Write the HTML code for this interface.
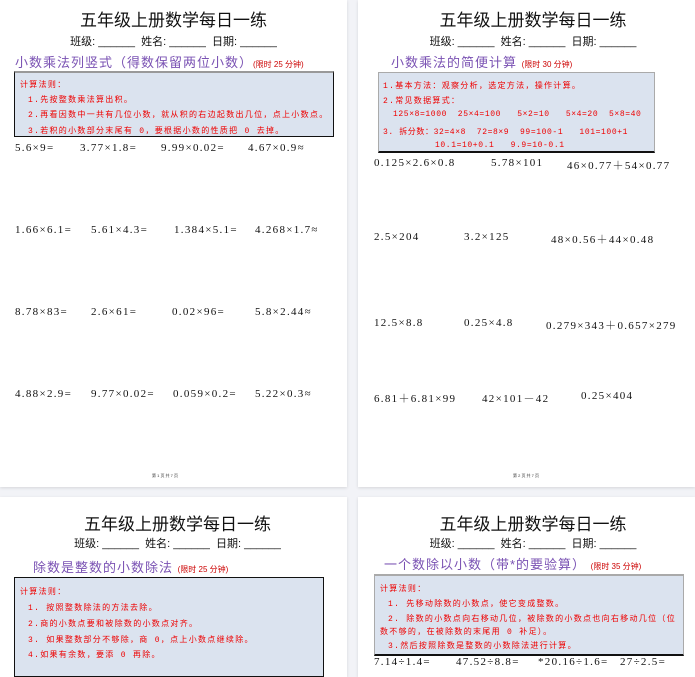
<!DOCTYPE html>
<html><head><meta charset="utf-8"><style>
*{margin:0;padding:0;box-sizing:border-box}
body{width:695px;height:664px;overflow:hidden;background:#f2f3f7;position:relative;font-family:"Liberation Sans","Noto Sans CJK SC",sans-serif}
.pg{position:absolute;background:#fff;box-shadow:0 1px 3px rgba(0,0,0,.12);overflow:hidden}
.a{position:absolute;white-space:nowrap}
.t{font-size:17px;color:#111;text-align:center;width:100%;left:0}
.i{font-size:11px;color:#111;text-align:center;width:100%;left:0}
.s{font-size:13px;color:#7a52b3;letter-spacing:1px}
.s small{font-size:8px;color:#c00;letter-spacing:0}
.box{position:absolute;background:#dbe3ef;border:1px solid #111}
.r{position:absolute;font-size:8px;color:#e00;white-space:nowrap;font-family:"Liberation Mono","Noto Sans CJK SC",monospace;letter-spacing:1.3px}
.q{position:absolute;font-size:11px;color:#111;white-space:nowrap;font-family:"Liberation Serif","Noto Serif CJK SC",serif;letter-spacing:1.3px}
</style></head><body>

<div class="pg" style="left:0;top:0;width:347px;height:487px">
<div class="a t" style="top:6px">五年级上册数学每日一练</div>
<div class="a i" style="top:33px">班级: ______ &nbsp;姓名: ______ &nbsp;日期: ______</div>
<div class="a s" style="left:15px;top:52px">小数乘法列竖式（得数保留两位小数）<small>(限时 25 分钟)</small></div>
<div class="box" style="left:14px;top:71px;width:320px;height:66px;border-top-color:#999;border-top-width:2px"></div>
<div class="r" style="left:20px;top:79px">计算法则：</div>
<div class="r" style="left:28px;top:94px">1.先按整数乘法算出积。</div>
<div class="r" style="left:28px;top:109px">2.再看因数中一共有几位小数，就从积的右边起数出几位，点上小数点。</div>
<div class="r" style="left:28px;top:125px">3.若积的小数部分末尾有 0，要根据小数的性质把 0 去掉。</div>
<div class="q" style="left:15px;top:142px">5.6×9=</div><div class="q" style="left:80px;top:142px">3.77×1.8=</div><div class="q" style="left:161px;top:142px">9.99×0.02=</div><div class="q" style="left:248px;top:142px">4.67×0.9≈</div>
<div class="q" style="left:15px;top:224px">1.66×6.1=</div><div class="q" style="left:91px;top:224px">5.61×4.3=</div><div class="q" style="left:174px;top:224px">1.384×5.1=</div><div class="q" style="left:255px;top:224px">4.268×1.7≈</div>
<div class="q" style="left:15px;top:306px">8.78×83=</div><div class="q" style="left:91px;top:306px">2.6×61=</div><div class="q" style="left:172px;top:306px">0.02×96=</div><div class="q" style="left:255px;top:306px">5.8×2.44≈</div>
<div class="q" style="left:15px;top:388px">4.88×2.9=</div><div class="q" style="left:91px;top:388px">9.77×0.02=</div><div class="q" style="left:173px;top:388px">0.059×0.2=</div><div class="q" style="left:255px;top:388px">5.22×0.3≈</div>
<div class="a" style="left:152px;top:473px;font-size:4px;color:#333">第 1 页 共 7 页</div>
</div>

<div class="pg" style="left:358px;top:0;width:337px;height:487px">
<div class="a t" style="left:0;width:350px;top:6px">五年级上册数学每日一练</div>
<div class="a i" style="left:0;width:350px;top:33px">班级: ______ &nbsp;姓名: ______ &nbsp;日期: ______</div>
<div class="a s" style="left:33px;top:52px">小数乘法的简便计算 <small>(限时 30 分钟)</small></div>
<div class="box" style="left:20px;top:72px;width:277px;height:81px;border:1px solid #aaa;border-bottom:2px solid #111"></div>
<div class="r" style="left:25px;top:80px">1.基本方法：观察分析，选定方法，操作计算。</div>
<div class="r" style="left:25px;top:95px">2.常见数据算式：</div>
<div class="r" style="left:35px;top:110px;letter-spacing:.6px">125×8=1000 &nbsp;25×4=100 &nbsp;&nbsp;5×2=10 &nbsp;&nbsp;5×4=20 &nbsp;5×8=40</div>
<div class="r" style="left:25px;top:126px;letter-spacing:.6px">3. 拆分数：32=4×8 &nbsp;72=8×9 &nbsp;99=100-1 &nbsp;&nbsp;101=100+1</div>
<div class="r" style="left:77px;top:141px;letter-spacing:.6px">10.1=10+0.1 &nbsp;&nbsp;9.9=10-0.1</div>
<div class="q" style="left:16px;top:157px">0.125×2.6×0.8</div><div class="q" style="left:133px;top:157px">5.78×101</div><div class="q" style="left:209px;top:157px">46×0.77＋54×0.77</div>
<div class="q" style="left:16px;top:231px">2.5×204</div><div class="q" style="left:106px;top:231px">3.2×125</div><div class="q" style="left:193px;top:231px">48×0.56＋44×0.48</div>
<div class="q" style="left:16px;top:317px">12.5×8.8</div><div class="q" style="left:106px;top:317px">0.25×4.8</div><div class="q" style="left:188px;top:317px">0.279×343＋0.657×279</div>
<div class="q" style="left:16px;top:390px">6.81＋6.81×99</div><div class="q" style="left:124px;top:390px">42×101－42</div><div class="q" style="left:223px;top:390px">0.25×404</div>
<div class="a" style="left:155px;top:473px;font-size:4px;color:#333">第 2 页 共 7 页</div>
</div>

<div class="pg" style="left:0;top:497px;width:347px;height:180px">
<div class="a t" style="left:0;width:355px;top:13px">五年级上册数学每日一练</div>
<div class="a i" style="left:0;width:355px;top:38px">班级: ______ &nbsp;姓名: ______ &nbsp;日期: ______</div>
<div class="a s" style="left:33px;top:60px">除数是整数的小数除法 <small>(限时 25 分钟)</small></div>
<div class="box" style="left:14px;top:80px;width:310px;height:100px"></div>
<div class="r" style="left:20px;top:89px">计算法则：</div>
<div class="r" style="left:28px;top:105px">1. 按照整数除法的方法去除。</div>
<div class="r" style="left:28px;top:121px">2.商的小数点要和被除数的小数点对齐。</div>
<div class="r" style="left:28px;top:137px">3. 如果整数部分不够除，商 0，点上小数点继续除。</div>
<div class="r" style="left:28px;top:152px">4.如果有余数，要添 0 再除。</div>
</div>

<div class="pg" style="left:358px;top:497px;width:337px;height:180px">
<div class="a t" style="left:0;width:350px;top:13px">五年级上册数学每日一练</div>
<div class="a i" style="left:0;width:350px;top:38px">班级: ______ &nbsp;姓名: ______ &nbsp;日期: ______</div>
<div class="a s" style="left:26px;top:57px">一个数除以小数（带*的要验算） <small>(限时 35 分钟)</small></div>
<div class="box" style="left:16px;top:77px;width:310px;height:82px;border-top:2px solid #aaa;border-left-color:#aaa;border-right-color:#aaa;border-bottom:2px solid #111"></div>
<div class="r" style="left:22px;top:86px">计算法则：</div>
<div class="r" style="left:30px;top:101px">1. 先移动除数的小数点，使它变成整数。</div>
<div class="r" style="left:30px;top:116px">2. 除数的小数点向右移动几位，被除数的小数点也向右移动几位（位</div>
<div class="r" style="left:22px;top:129px">数不够的，在被除数的末尾用 0 补足）。</div>
<div class="r" style="left:30px;top:143px">3.然后按照除数是整数的小数除法进行计算。</div>
<div class="q" style="left:16px;top:159px">7.14÷1.4=</div><div class="q" style="left:98px;top:159px">47.52÷8.8=</div><div class="q" style="left:180px;top:159px">*20.16÷1.6=</div><div class="q" style="left:262px;top:159px">27÷2.5=</div>
</div>
</body></html>
